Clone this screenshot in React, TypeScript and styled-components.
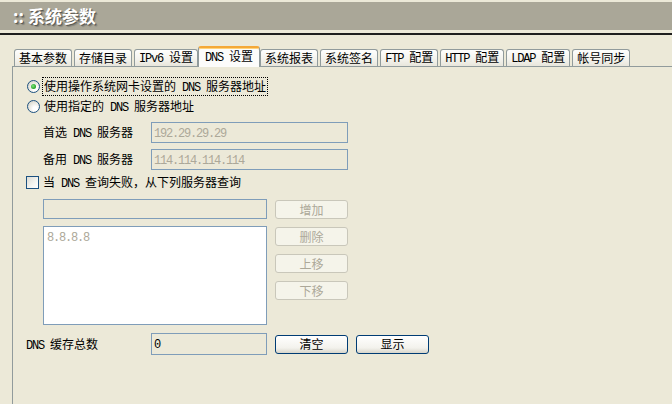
import React from 'react';
import styled, { createGlobalStyle, css } from 'styled-components';

const GlobalStyle = createGlobalStyle`
  html, body {
    margin: 0;
    padding: 0;
    background: #ece9d8;
    overflow: hidden;
  }
  body {
    font-family: "Noto Sans CJK SC", "Noto Sans", sans-serif;
    font-size: 12px;
    line-height: 14px;
    color: #000;
  }
`;

const Page = styled.div`
  width: 672px;
  height: 404px;
  display: flex;
  flex-direction: column;
  background: #ece9d8;
  overflow: hidden;
`;

const TitleBar = styled.div`
  margin-top: 2px;
  height: 28px;
  background: #aaa798;
  display: flex;
  align-items: center;
  padding-left: 13px;
`;

const Title = styled.h1`
  margin: 0;
  font-size: 17px;
  line-height: 20px;
  font-weight: bold;
  color: #fff;
  text-shadow: 1px 1px 0 #5e5c54, 2px 2px 1px #86847a;
`;

const Rule = styled.div`
  margin-top: 3px;
  height: 2px;
  background: #1e1e1e;
`;

const TabList = styled.div`
  margin-top: 12px;
  height: 19px;
  padding-left: 14px;
  display: flex;
  align-items: flex-end;
  position: relative;
  z-index: 1;
`;

const Tab = styled.div<{ $active?: boolean }>`
  height: 16px;
  padding: 0 4px;
  margin-right: 2px;
  border: 1px solid #919b9c;
  border-bottom: none;
  border-radius: 3px 3px 0 0;
  background: linear-gradient(#fefefd, #f3f2ec 60%, #e8e6dc);
  display: flex;
  align-items: center;
  white-space: nowrap;
  ${(p) =>
    p.$active &&
    css`
      height: 18px;
      padding: 1px 6px 0;
      margin: 0 0 -1px -2px;
      border-top: 2px solid #f4a838;
      background: #fcfcfb;
      box-shadow: inset 0 1px 0 #ffd37a;
      align-items: flex-start;
    `}
`;

const Panel = styled.div`
  flex: 1;
  margin-left: 12px;
  margin-right: -20px;
  border-top: 1px solid #919b9c;
  border-left: 1px solid #919b9c;
  padding-top: 11px;
  display: flex;
  flex-direction: column;
`;

const OptionRow = styled.div`
  height: 17px;
  display: flex;
  align-items: center;
  margin-bottom: 3px;
`;

const RadioRow = styled(OptionRow)`
  padding-left: 14px;
`;

const CheckRow = styled(OptionRow)`
  padding-left: 13px;
  margin-top: 4px;
`;

const Radio = styled.span<{ $checked?: boolean }>`
  width: 11px;
  height: 11px;
  border: 1px solid #1c5180;
  border-radius: 50%;
  background: radial-gradient(circle at 65% 70%, #ffffff 20%, #e6e5dd 60%, #c9c8bd 100%);
  display: flex;
  align-items: center;
  justify-content: center;
  flex-shrink: 0;
  &::after {
    content: '';
    width: 5px;
    height: 5px;
    border-radius: 50%;
    background: ${(p) => (p.$checked ? 'radial-gradient(circle at 40% 40%, #7fe27f, #21a121 70%)' : 'transparent')};
  }
`;

const Check = styled.span`
  width: 11px;
  height: 11px;
  border: 1px solid #1c5180;
  background: linear-gradient(135deg, #dcdcd5, #f5f5f1 60%, #ffffff);
  flex-shrink: 0;
`;

const OptionLabel = styled.span<{ $focused?: boolean }>`
  margin-left: 2px;
  padding: 1px 1px 0;
  border: 1px dotted ${(p) => (p.$focused ? '#000' : 'transparent')};
  white-space: nowrap;
`;

const FieldGrid = styled.div`
  margin-top: 4px;
  padding-left: 30px;
  display: grid;
  grid-template-columns: 108px 197px;
  row-gap: 6px;
  align-items: center;
`;

const FieldLabel = styled.span`
  white-space: nowrap;
`;

const TextBox = styled.div<{ $h?: number; $muted?: boolean; $white?: boolean }>`
  box-sizing: border-box;
  height: ${(p) => p.$h ?? 21}px;
  border: 1px solid #7f9db9;
  background: ${(p) => (p.$white ? '#fff' : '#ece9d8')};
  color: ${(p) => (p.$muted ? '#aca899' : '#000')};
  padding: ${(p) => (p.$white ? '2px 3px' : '0 2px')};
  display: flex;
  align-items: ${(p) => (p.$white ? 'flex-start' : 'center')};
`;

const BackupGrid = styled.div`
  margin-top: 5px;
  padding-left: 30px;
  display: grid;
  grid-template-columns: 224px 73px;
  column-gap: 8px;
  row-gap: 7px;
`;

const ButtonStack = styled.div`
  display: flex;
  flex-direction: column;
  gap: 8px;
  padding-top: 1px;
`;

const Button = styled.button<{ $disabled?: boolean }>`
  box-sizing: border-box;
  width: 73px;
  height: 19px;
  margin: 0;
  padding: 0;
  font: inherit;
  border-radius: 3px;
  display: flex;
  align-items: center;
  justify-content: center;
  border: 1px solid #003c74;
  background: linear-gradient(#ffffff, #f3f2ec 70%, #d8d6cb);
  color: #000;
  ${(p) =>
    p.$disabled &&
    css`
      border-color: #c9c7ba;
      background: #f5f4ea;
      color: #aca899;
    `}
`;

const CacheRow = styled.div`
  margin-top: 8px;
  padding-left: 13px;
  display: grid;
  grid-template-columns: 117px 116px 73px 73px;
  column-gap: 8px;
  align-items: center;
`;

const CacheLabel = styled.span`
  align-self: start;
  padding-top: 4px;
  white-space: nowrap;
`;

const Latin = styled.span`
  font-family: "Liberation Mono", "DejaVu Sans Mono", monospace;
  font-size: 12px;
  letter-spacing: -1.2px;
`;

function Txt({ s }: { s: string }) {
  const parts = s.split(/([\x20-\x7e]+)/).filter(Boolean);
  return (
    <span>
      {parts.map((p, i) =>
        /^[\x20-\x7e]+$/.test(p) ? <Latin key={i}>{p}</Latin> : <React.Fragment key={i}>{p}</React.Fragment>
      )}
    </span>
  );
}

const tabs = ['基本参数', '存储目录', 'IPv6 设置', 'DNS 设置', '系统报表', '系统签名', 'FTP 配置', 'HTTP 配置', 'LDAP 配置', '帐号同步'];
const activeTab = 'DNS 设置';

export default function App() {
  return (
    <>
      <GlobalStyle />
      <Page>
        <TitleBar>
          <Title>:: 系统参数</Title>
        </TitleBar>
        <Rule />
        <TabList>
          {tabs.map((t) => (
            <Tab key={t} $active={t === activeTab}>
              <Txt s={t} />
            </Tab>
          ))}
        </TabList>
        <Panel>
          <RadioRow>
            <Radio $checked />
            <OptionLabel $focused>
              <Txt s="使用操作系统网卡设置的 DNS 服务器地址" />
            </OptionLabel>
          </RadioRow>
          <RadioRow>
            <Radio />
            <OptionLabel>
              <Txt s="使用指定的 DNS 服务器地址" />
            </OptionLabel>
          </RadioRow>
          <FieldGrid>
            <FieldLabel>
              <Txt s="首选 DNS 服务器" />
            </FieldLabel>
            <TextBox $muted>
              <Txt s="192.29.29.29" />
            </TextBox>
            <FieldLabel>
              <Txt s="备用 DNS 服务器" />
            </FieldLabel>
            <TextBox $muted>
              <Txt s="114.114.114.114" />
            </TextBox>
          </FieldGrid>
          <CheckRow>
            <Check />
            <OptionLabel>
              <Txt s="当 DNS 查询失败，从下列服务器查询" />
            </OptionLabel>
          </CheckRow>
          <BackupGrid>
            <TextBox $h={20} />
            <ButtonStack>
              <Button $disabled>增加</Button>
            </ButtonStack>
            <TextBox $h={99} $white $muted>
              <Txt s="8.8.8.8" />
            </TextBox>
            <ButtonStack>
              <Button $disabled>删除</Button>
              <Button $disabled>上移</Button>
              <Button $disabled>下移</Button>
            </ButtonStack>
          </BackupGrid>
          <CacheRow>
            <CacheLabel>
              <Txt s="DNS 缓存总数" />
            </CacheLabel>
            <TextBox $h={22}>
              <Txt s="0" />
            </TextBox>
            <Button>清空</Button>
            <Button>显示</Button>
          </CacheRow>
        </Panel>
      </Page>
    </>
  );
}
